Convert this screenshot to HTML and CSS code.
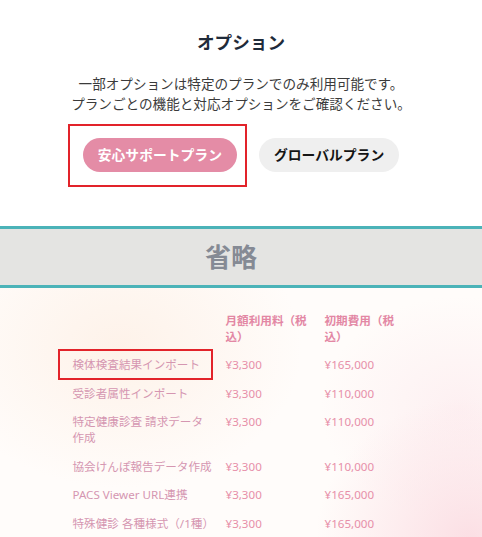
FILE: index.html
```html
<!DOCTYPE html>
<html lang="ja">
<head>
<meta charset="utf-8">
<title>オプション</title>
<link rel="stylesheet" href="styles.css">
</head>
<body>
<section class="options">
  <h2 class="title">オプション</h2>
  <p class="lead">一部オプションは特定のプランでのみ利用可能です。<br>プランごとの機能と対応オプションをご確認ください。</p>
  <div class="tabs">
    <button class="tab tab-active mark-btn">安心サポートプラン</button>
    <button class="tab">グローバルプラン</button>
  </div>
</section>
<div class="band">省略</div>
<section class="prices">
  <div class="table">
    <div class="cell head"></div>
    <div class="cell head">月額利用料（税込）</div>
    <div class="cell head">初期費用（税込）</div>

    <div class="cell name"><span class="mark-row">検体検査結果インポート</span></div>
    <div class="cell val">¥3,300</div>
    <div class="cell val">¥165,000</div>

    <div class="cell name">受診者属性インポート</div>
    <div class="cell val">¥3,300</div>
    <div class="cell val">¥110,000</div>

    <div class="cell name">特定健康診査 請求データ作成</div>
    <div class="cell val">¥3,300</div>
    <div class="cell val">¥110,000</div>

    <div class="cell name">協会けんぽ報告データ作成</div>
    <div class="cell val">¥3,300</div>
    <div class="cell val">¥110,000</div>

    <div class="cell name">PACS Viewer URL連携</div>
    <div class="cell val">¥3,300</div>
    <div class="cell val">¥165,000</div>

    <div class="cell name">特殊健診 各種様式（/1種）</div>
    <div class="cell val">¥3,300</div>
    <div class="cell val">¥165,000</div>
  </div>
</section>
</body>
</html>
```

FILE: styles.css
```css
* { box-sizing: border-box; }
html, body { margin: 0; padding: 0; }
body {
  font-family: "Noto Sans", "Noto Sans CJK JP", sans-serif;
  background: #fff;
  width: 482px;
  min-height: 537px;
  overflow: hidden;
}
.options {
  text-align: center;
  padding-top: 29px;
}
.title {
  margin: 0;
  font-size: 17.6px;
  line-height: 26px;
  font-weight: 700;
  color: #1f2b3a;
}
.lead {
  margin: 19px 0 0;
  font-size: 13.6px;
  line-height: 20px;
  color: #3b3b3b;
}
.tabs {
  margin-top: 24px;
  display: flex;
  justify-content: center;
  gap: 22px;
}
.tab {
  font-family: inherit;
  border: 0;
  height: 34px;
  padding: 0 15px;
  border-radius: 17px;
  font-size: 13.8px;
  font-weight: 700;
  line-height: 34px;
  background: #efefef;
  color: #151515;
}
.tab-active {
  background: #e48ca6;
  color: #fff;
}
.mark-btn { position: relative; }
.mark-btn::after {
  content: "";
  position: absolute;
  top: -14px; bottom: -15px; left: -15px; right: -10px;
  border: 2px solid #e2232a;
}
.band {
  margin-top: 54px;
  border-top: 3px solid #4bb3b8;
  border-bottom: 3px solid #4bb3b8;
  background: #e4e4e2;
  height: 62px;
  line-height: 56px;
  padding-right: 20px;
  text-align: center;
  font-size: 26px;
  font-weight: 700;
  color: #858a94;
}
.prices {
  padding-top: 18.5px;
  min-height: 249px;
  background:
    radial-gradient(ellipse 260px 200px at 120px 60px, rgba(253, 238, 226, 0.7), rgba(255,255,255,0) 70%),
    radial-gradient(ellipse 220px 200px at 470px 250px, rgba(251, 220, 226, 0.9), rgba(255,255,255,0) 70%),
    radial-gradient(ellipse 200px 160px at 460px 120px, rgba(252, 232, 236, 0.6), rgba(255,255,255,0) 70%),
    #fffcfa;
}
.table {
  width: 337px;
  margin: 0 auto;
  display: grid;
  grid-template-columns: 153px 99px 85px;
}
.cell {
  padding: 6.25px 8px 6.25px 0;
  font-size: 11.6px;
  line-height: 16px;
}
.head {
  font-weight: 700;
  color: #e387a4;
}
.name {
  color: #d596b1;
  padding-right: 12.5px;
}
.val { color: #e78fa9; }
.mark-row { position: relative; }
.mark-row::after {
  content: "";
  position: absolute;
  top: -8px; bottom: -8px; left: -15px; right: -13px;
  border: 2px solid #e2232a;
}
```
